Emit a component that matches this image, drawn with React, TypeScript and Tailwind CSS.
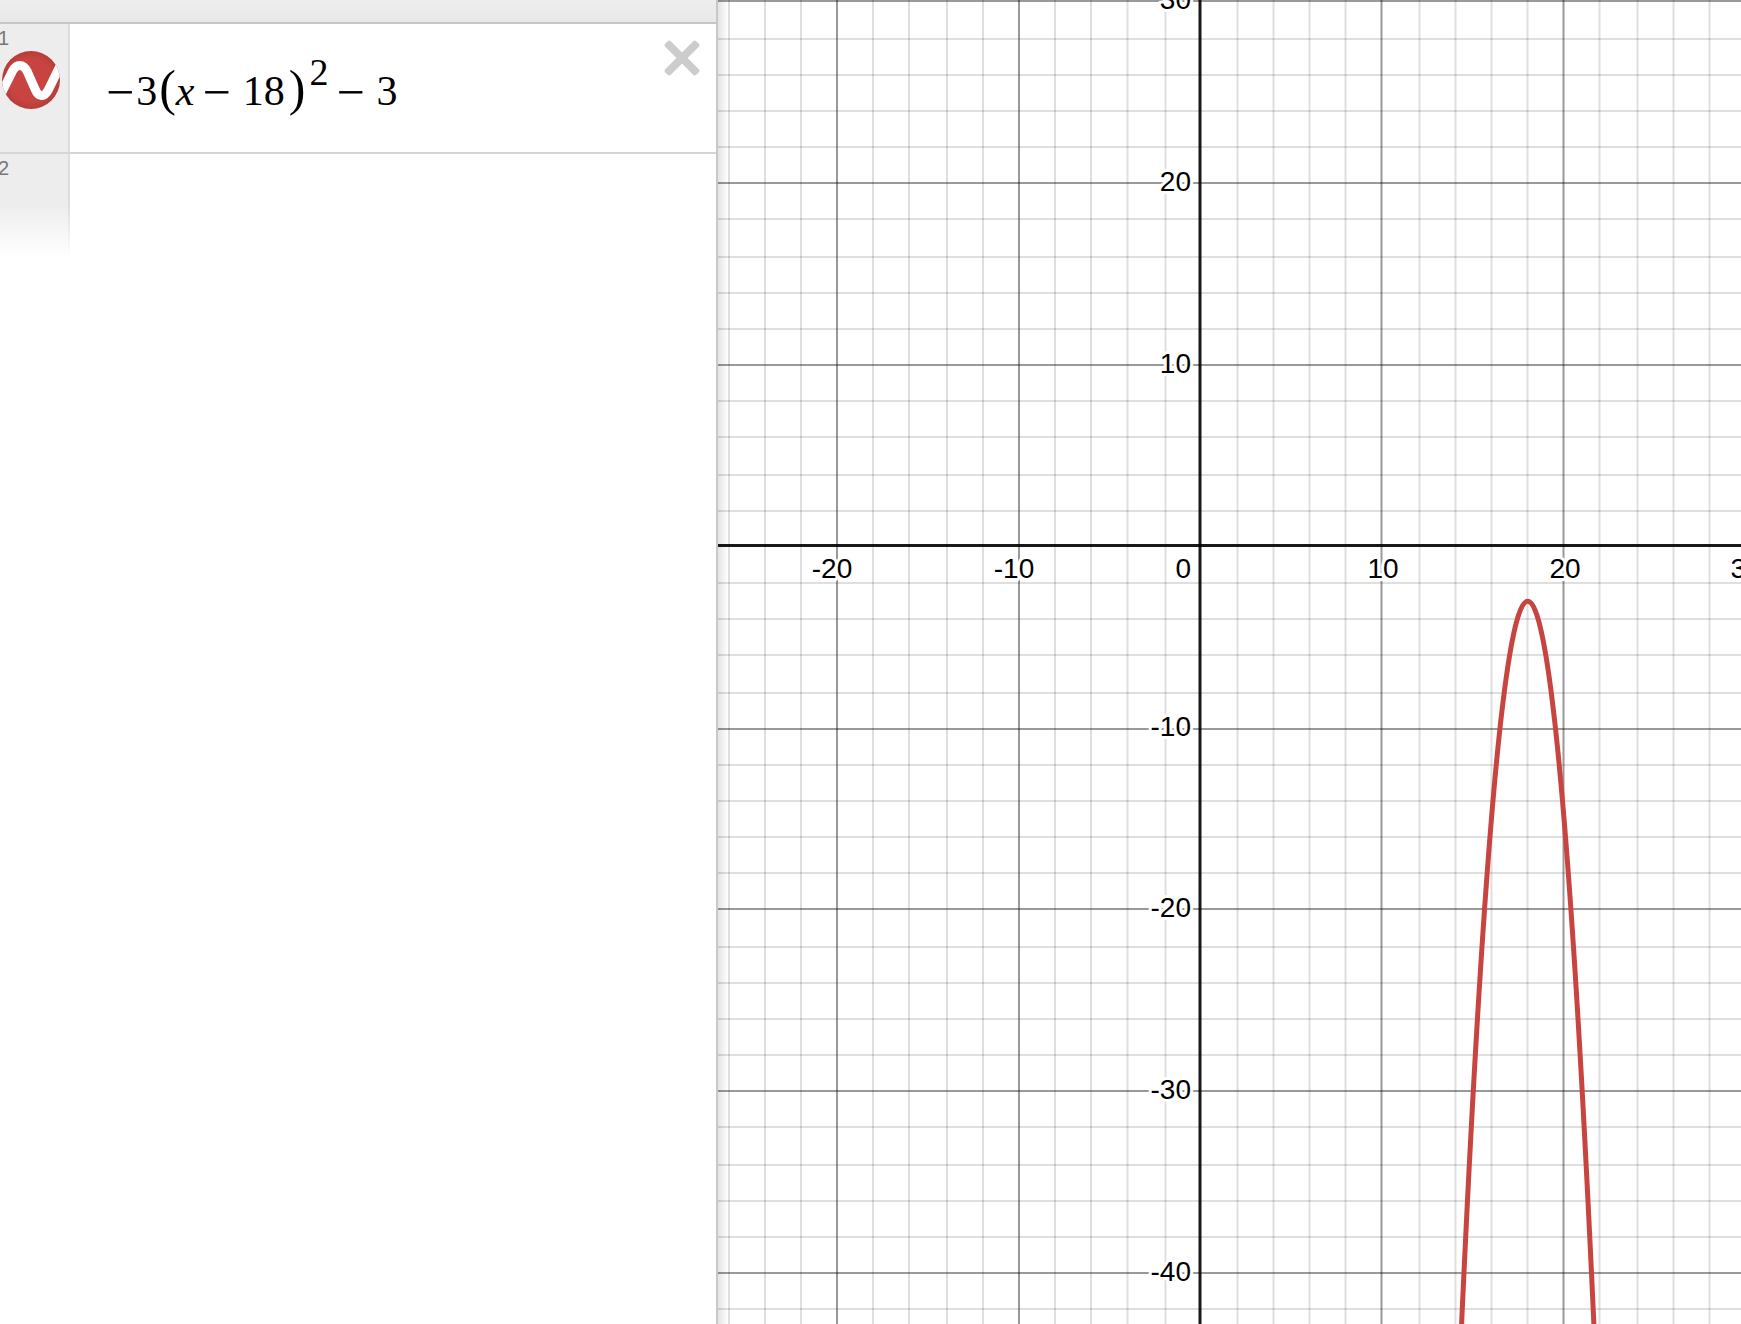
import React from "react";

const STEP_X = 36.32;
const STEP_Y = 36.32;
const ORIGIN_X = 482.35;
const ORIGIN_Y = 546.73;

const snap = (v: number) => Math.floor(v / 2) * 2 + 1;
const lineX = (k: number) => snap(ORIGIN_X + k * STEP_X) + (k > -3 ? 0.5 : 0);
const lineY = (k: number) => snap(ORIGIN_Y - k * STEP_Y);

const range = (from: number, to: number) =>
  Array.from({ length: to - from + 1 }, (_, i) => from + i);

const px = (x: number) => ORIGIN_X + 0.5 + (x * STEP_X) / 2;
const py = (y: number) => ORIGIN_Y - (y * STEP_Y) / 2;

function GridLines() {
  const cols = range(-13, 60).filter((k) => k !== 0);
  const rows = range(-60, 15).filter((k) => k !== 0);
  return (
    <g stroke="#000" strokeWidth={2}>
      {cols.map((k) => (
        <line key={`c${k}`} x1={lineX(k)} x2={lineX(k)} y1="0" y2="100%" strokeOpacity={k % 5 === 0 ? 0.4 : 0.125} />
      ))}
      {rows.map((k) => (
        <line key={`r${k}`} x1="0" x2="100%" y1={lineY(k)} y2={lineY(k)} strokeOpacity={k % 5 === 0 ? 0.4 : 0.125} />
      ))}
    </g>
  );
}

function Graph() {
  const xs = [-20, -10, 10, 20, 30, 40, 50];
  const ys = [30, 20, 10, -10, -20, -30, -40, -50];
  return (
    <svg className="block h-full w-full" role="img" aria-label="Graph of -3(x - 18)^2 - 3">
      <defs>
        <linearGradient id="edge">
          <stop offset="0" stopColor="#000" stopOpacity="0.11" />
          <stop offset="1" stopColor="#000" stopOpacity="0" />
        </linearGradient>
      </defs>
      <GridLines />
      <g stroke="#000" strokeOpacity={0.9} strokeWidth={3}>
        <line x1="0" x2="100%" y1="545.5" y2="545.5" />
        <line x1="482" x2="482" y1="0" y2="100%" />
      </g>
      <g
        fill="#000"
        stroke="#fff"
        strokeWidth={6}
        strokeLinejoin="round"
        paintOrder="stroke"
        className="font-['Liberation_Sans',Arial,sans-serif] text-[28px]"
      >
        {xs.map((v) => (
          <text key={v} x={Math.floor(px(v)) + (v < 0 ? -5 : 1)} y="578" textAnchor="middle">
            {v}
          </text>
        ))}
        {ys.map((v) => (
          <text key={v} x="473" y={Math.round(py(v) + 7.5)} textAnchor="end">
            {v}
          </text>
        ))}
        <text x="473" y="578" textAnchor="end">
          0
        </text>
      </g>
      <path
        d={`M${px(14)} ${py(-51)} Q${px(18)} ${py(45)} ${px(22)} ${py(-51)}`}
        fill="none"
        stroke="#c74440"
        strokeWidth={5}
      />
      <rect x="0" y="0" width="10" height="100%" fill="url(#edge)" />
    </svg>
  );
}

function CurveIcon() {
  return (
    <svg viewBox="0 0 58 58" className="block size-[58px]" aria-hidden="true">
      <defs>
        <clipPath id="disc">
          <circle cx="29" cy="29" r="29" />
        </clipPath>
        <radialGradient id="shade">
          <stop offset="0.75" stopColor="#c74440" />
          <stop offset="1" stopColor="#b43d3a" />
        </radialGradient>
      </defs>
      <circle cx="29" cy="29" r="29" fill="url(#shade)" />
      <path
        clipPath="url(#disc)"
        d="M-4 49 L10.500 20 C14.500 12.500 21 12.500 25 20 L33 38 C36.500 46.500 42.500 46.500 46.500 38.500 L60 11"
        fill="none"
        stroke="#fff"
        strokeWidth="9"
      />
    </svg>
  );
}

function CloseIcon() {
  return (
    <svg viewBox="-18 -18 36 36" className="block size-9" fill="#ccc" aria-hidden="true">
      <rect x="-22" y="-4" width="44" height="8" rx="2.5" transform="rotate(45)" />
      <rect x="-22" y="-4" width="44" height="8" rx="2.5" transform="rotate(-45)" />
    </svg>
  );
}

function Minus() {
  return <span className="relative top-1 text-[50px]">−</span>;
}

function Formula() {
  return (
    <div
      role="math"
      aria-label="-3(x - 18)^2 - 3"
      className="flex items-baseline whitespace-nowrap pl-9 pt-10 font-['Liberation_Serif','Times_New_Roman',serif] text-[42px] leading-[48px] text-black"
    >
      <Minus />
      <span className="ml-0.5">3</span>
      <span className="ml-0.5 text-[50px]">(</span>
      <span className="mr-2 italic">x</span>
      <Minus />
      <span className="ml-3">18</span>
      <span className="ml-1 text-[50px]">)</span>
      <sup className="relative -top-5 ml-1 mr-2 text-[38px] leading-none">2</sup>
      <Minus />
      <span className="ml-3">3</span>
    </div>
  );
}

export default function App() {
  return (
    <main className="flex h-screen overflow-hidden bg-white font-['Liberation_Sans',Arial,sans-serif]">
      <section className="flex w-[718px] shrink-0 flex-col border-r-2 border-[#c8c8c8]" aria-label="Expressions">
        <div className="h-6 border-b-2 border-[#c6c6c6] bg-linear-to-b from-[#eeeeee] to-[#e8e8e8]" />
        <div className="flex h-[130px] border-b-2 border-[#d6d6d6]">
          <div className="w-[70px] border-r-2 border-[#dddddd] bg-[#ededed] pt-1">
            <div className="-ml-0.5 text-[20px] leading-5 text-[#777]">1</div>
            <button type="button" aria-label="Hide curve" className="ml-0.5 mt-[3px] block rounded-full">
              <CurveIcon />
            </button>
          </div>
          <div className="flex flex-1 items-start justify-between">
            <Formula />
            <button type="button" aria-label="Delete expression" className="mr-4 mt-4 block">
              <CloseIcon />
            </button>
          </div>
        </div>
        <label className="flex h-[104px]">
          <span className="relative w-[70px] border-r-2 border-[#dddddd] bg-[#ededed] pt-1">
            <span className="-ml-0.5 block text-[20px] leading-5 text-[#777]">2</span>
            <span className="absolute -right-0.5 bottom-0 left-0 h-[54px] bg-linear-to-b from-white/0 to-white" />
          </span>
          <input type="text" aria-label="Expression 2" className="min-w-0 flex-1 px-9 text-[42px] outline-none" />
        </label>
      </section>
      <section className="min-w-0 flex-1" aria-label="Graph">
        <Graph />
      </section>
    </main>
  );
}
